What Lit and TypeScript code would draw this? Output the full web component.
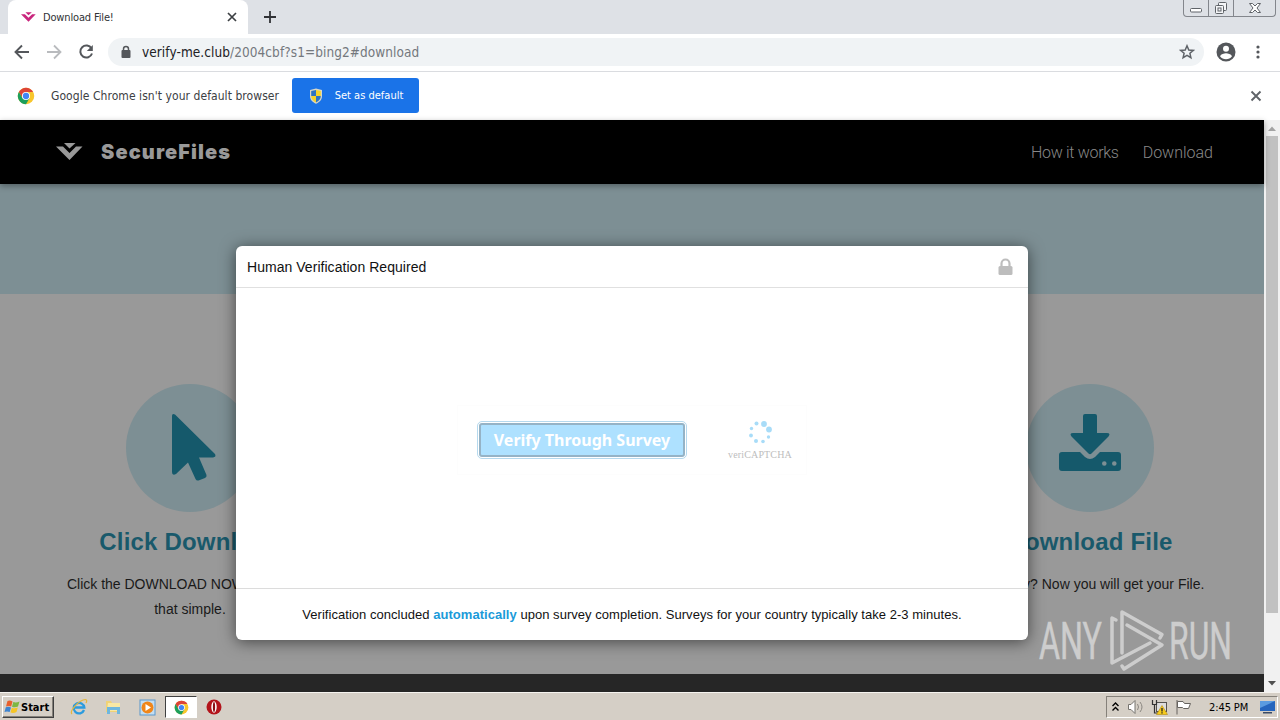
import { LitElement, html, css, svg } from "lit";
import { customElement } from "lit/decorators.js";

const chromeLogo = svg`
  <circle cx="12" cy="12" r="11" fill="#f8c62c"/>
  <path d="M2.5 6.5A11 11 0 0 1 21.5 6.5H12L7.2 14.8z" fill="#dd4437"/>
  <path d="M2.5 6.5A11 11 0 0 0 12 23L16.8 14.8H7.2z" fill="#1c9f5c"/>
  <circle cx="12" cy="12" r="5.4" fill="#fff"/>
  <circle cx="12" cy="12" r="4.2" fill="#4285f4"/>`;

const vMark = svg`
  <path d="M8 0H19.500L13.500 5.500z"/>
  <path d="M0 3.500H7L13.500 10L20 3.500H26.500L13.500 17z"/>`;

@customElement("browser-bar")
class BrowserBar extends LitElement {
  static styles = css`
    :host {
      display: block;
      font-family: "DejaVu Sans Condensed", "DejaVu Sans", sans-serif;
      font-stretch: condensed;
      color: #3c4043;
      background: #fff;
    }

    svg {
      display: block;
      flex: none;
    }

    .tabs {
      display: flex;
      height: 34px;
      background: #dee1e6;
      padding-left: 8px;
    }

    .tab {
      display: flex;
      align-items: center;
      box-sizing: border-box;
      width: 240px;
      padding: 0 10px 0 13px;
      background: #fff;
      border-radius: 8px 8px 0 0;
    }

    .tab__title {
      flex: 1;
      margin-left: 7px;
      font-size: 11px;
      letter-spacing: -0.15px;
      color: #303236;
    }

    .plus {
      margin: 10px 0 0 15px;
    }

    .window {
      display: flex;
      margin-left: auto;
      margin-right: 4px;
      box-sizing: border-box;
      width: 93px;
      height: 17px;
      border: 1px solid #83868c;
      border-top: 0;
      border-radius: 0 0 4px 4px;
    }

    .window__btn {
      display: flex;
      justify-content: center;
      align-items: center;
      width: 24px;
      border-right: 1px solid #83868c;
    }

    .window__btn--close {
      flex: 1;
      border: 0;
    }

    .toolbar {
      display: flex;
      align-items: center;
      box-sizing: border-box;
      height: 38px;
      padding: 0 13px 2px 13px;
      border-bottom: 1px solid #dadce0;
    }

    .nav {
      display: flex;
      gap: 14px;
      width: 95px;
    }

    .url {
      display: flex;
      flex: 1;
      align-items: center;
      height: 28px;
      padding: 0 9px 0 11px;
      background: #f0f3f5;
      border-radius: 14px;
    }

    .url__text {
      flex: 1;
      margin-left: 9px;
      font-size: 13.5px;
      letter-spacing: 0.07px;
      color: #74787d;
    }

    .url__text b {
      font-weight: normal;
      color: #202124;
    }

    .avatar {
      margin: 0 12px 0 12px;
    }

    .infobar {
      display: flex;
      align-items: center;
      box-sizing: border-box;
      height: 48px;
      padding: 0 18px 1px 17px;
    }

    .infobar__text {
      width: 241px;
      margin-left: 16px;
      font-size: 12px;
      letter-spacing: 0.06px;
      white-space: nowrap;
    }

    .infobar__btn {
      display: flex;
      align-items: center;
      justify-content: center;
      gap: 11px;
      width: 127px;
      height: 35px;
      border-radius: 3px;
      background: #1a73e8;
      color: #fff;
      font-size: 11px;
    }

    .infobar__close {
      margin-left: auto;
    }
  `;

  render() {
    return html`
      <div class="tabs">
        <div class="tab">
          <svg width="15" height="10" viewBox="0 0 27 17" fill="#c9267d">${vMark}</svg>
          <span class="tab__title">Download File!</span>
          <svg width="12" height="12" viewBox="0 0 12 12" stroke="#3c4043" stroke-width="1.700">
            <path d="M2 2L10 10M10 2L2 10"/>
          </svg>
        </div>
        <svg class="plus" width="14" height="14" viewBox="0 0 14 14" stroke="#303236" stroke-width="1.800">
          <path d="M7 1V13M1 7H13"/>
        </svg>
        <div class="window">
          <div class="window__btn">
            <svg width="14" height="16" fill="#fff" stroke="#5f6368"><rect x="1.500" y="8.500" width="11" height="3.500" rx="1"/></svg>
          </div>
          <div class="window__btn">
            <svg width="14" height="16" fill="#f4f5f7" stroke="#5f6368">
              <rect x="4.500" y="2.500" width="8" height="8" rx="1"/>
              <rect x="1.500" y="5.500" width="8" height="8" rx="1"/>
              <rect x="4" y="8" width="3" height="3"/>
            </svg>
          </div>
          <div class="window__btn window__btn--close">
            <svg width="14" height="16" viewBox="0 0 14 16" fill="#fff" stroke="#5f6368">
              <path d="M1.500 3.500H4.500L7 6L9.500 3.500H12.500L9 8L12.500 12.500H9.500L7 10L4.500 12.500H1.500L5 8z"/>
            </svg>
          </div>
        </div>
      </div>

      <div class="toolbar">
        <div class="nav">
          <svg width="18" height="18" viewBox="0 0 18 18" fill="none" stroke="#54575b" stroke-width="1.900"><path d="M16 9H3M9 2.500L2.500 9L9 15.500"/></svg>
          <svg width="18" height="18" viewBox="0 0 18 18" fill="none" stroke="#b9bbbe" stroke-width="1.800"><path d="M2 9H15M9 2.500L15.500 9L9 15.500"/></svg>
          <svg width="18" height="18" viewBox="0 0 18 18" fill="none" stroke="#54575b" stroke-width="2"><path d="M14.500 5.500A6 6 0 1 0 15 10.500"/><path d="M15.800 2V8H9.800z" fill="#54575b" stroke="none"/></svg>
        </div>
        <div class="url">
          <svg width="14" height="14" viewBox="0 0 14 14"><rect x="2.500" y="5" width="9" height="8" rx="1" fill="#54575b"/><path d="M4.500 6V4A2.500 2.500 0 0 1 9.500 4V6" fill="none" stroke="#54575b" stroke-width="1.500"/></svg>
          <span class="url__text"><b>verify-me.club</b>/2004cbf?s1=bing2#download</span>
          <svg width="16" height="16" viewBox="0 0 16 16" fill="none" stroke="#5f6368" stroke-width="1.500"><path d="M8 1.800L9.800 6L14.300 6.400L10.900 9.300L11.900 13.700L8 11.400L4.100 13.700L5.100 9.300L1.700 6.400L6.200 6z"/></svg>
        </div>
        <svg class="avatar" width="20" height="20" viewBox="0 0 20 20">
          <circle cx="10" cy="10" r="9.500" fill="#54575b"/>
          <circle cx="10" cy="6.700" r="3" fill="#fff"/>
          <path d="M4 14.200C5 12 8 11.300 10 11.300S15 12 16 14.200A7.300 7.300 0 0 1 4 14.200z" fill="#fff"/>
        </svg>
        <svg width="19" height="16" viewBox="0 0 19 16" fill="#54575b"><circle cx="10" cy="3" r="1.600"/><circle cx="10" cy="8" r="1.600"/><circle cx="10" cy="13" r="1.600"/></svg>
      </div>

      <div class="infobar">
        <svg width="18" height="18" viewBox="0 0 24 24">${chromeLogo}</svg>
        <span class="infobar__text">Google Chrome isn't your default browser</span>
        <div class="infobar__btn">
          <svg width="16" height="16" viewBox="0 0 16 16">
            <path d="M8 .500L14 2V8C14 12 11 14.500 8 15.700C5 14.500 2 12 2 8V2z" fill="#d7d7c8"/>
            <path d="M8 2V8H3.200V3z" fill="#2d74c4"/><path d="M8 2V8H12.800V3z" fill="#f5d32c"/>
            <path d="M8 8V14.400C5 13 3.200 11 3.200 8z" fill="#f5d32c"/><path d="M8 8V14.400C11 13 12.800 11 12.800 8z" fill="#2d74c4"/>
          </svg>
          <span>Set as default</span>
        </div>
        <svg class="infobar__close" width="12" height="12" viewBox="0 0 12 12" stroke="#5f6368" stroke-width="1.900"><path d="M1.500 1.500L10.500 10.500M10.500 1.500L1.500 10.500"/></svg>
      </div>
    `;
  }
}

@customElement("survey-modal")
class SurveyModal extends LitElement {
  static styles = css`
    :host {
      display: flex;
      flex-direction: column;
      background: #fff;
      border-radius: 6px;
      box-shadow: 0 2px 16px rgba(0, 0, 0, 0.55);
      font-family: "Liberation Sans", Arial, sans-serif;
      color: #111;
    }

    .head {
      display: flex;
      align-items: center;
      justify-content: space-between;
      height: 41px;
      padding: 0 15px 0 11px;
      border-bottom: 1px solid #e0e0e0;
      font-size: 14px;
      letter-spacing: 0.04px;
    }

    .body {
      display: flex;
      flex: 1;
      align-items: center;
      justify-content: center;
    }

    .box {
      display: flex;
      align-items: center;
      box-sizing: border-box;
      width: 350px;
      height: 70px;
      margin-top: 4px;
      padding-left: 19px;
      border: 1px solid #fdfdfd;
    }

    .btn {
      display: flex;
      align-items: center;
      justify-content: center;
      box-sizing: border-box;
      width: 206px;
      height: 34px;
      margin: 2px;
      border: 2px solid #95b3c6;
      border-radius: 3px;
      outline: 1px solid #b5d9ee;
      outline-offset: 1px;
      background: #aee1ff;
      color: #fff;
      font: bold 16px "Noto Sans", "Open Sans", sans-serif;
      white-space: nowrap;
    }

    .captcha {
      display: flex;
      flex-direction: column;
      align-items: center;
      width: 66px;
      margin-left: 40px;
      font: 10px "Liberation Serif", serif;
      letter-spacing: 0.15px;
      color: #bdbdbd;
    }

    .captcha span {
      margin-top: 3px;
    }

    .foot {
      display: flex;
      align-items: center;
      justify-content: center;
      height: 51px;
      border-top: 1px solid #dcdcdc;
      font-size: 13px;
      letter-spacing: 0.035px;
    }

    .foot p {
      margin: 0;
      white-space: nowrap;
    }

    .foot b {
      color: #1a9ad9;
    }
  `;

  render() {
    return html`
      <div class="head">
        <span>Human Verification Required</span>
        <svg width="15" height="18" viewBox="0 0 15 18"><rect x=".5" y="8" width="14" height="9" rx="1.500" fill="#bdbdbd"/><path d="M3.500 9V5.500A4 4 0 0 1 11.500 5.500V9" fill="none" stroke="#bdbdbd" stroke-width="2.200"/></svg>
      </div>
      <div class="body">
        <div class="box">
          <div class="btn">Verify Through Survey</div>
          <div class="captcha">
            <svg width="26" height="26" viewBox="0 0 26 26" fill="#a8dcf8">
              <circle cx="9.500" cy="3.500" r="2"/><circle cx="17" cy="4" r="2.900"/><circle cx="22" cy="9.500" r="2.900"/>
              <circle cx="21.500" cy="17" r="1.700"/><circle cx="16" cy="21.500" r="1.800"/><circle cx="9" cy="21" r="2"/>
              <circle cx="4" cy="15.500" r="1.900"/><circle cx="4.500" cy="8.500" r="1.700"/>
            </svg>
            <span>veriCAPTCHA</span>
          </div>
        </div>
      </div>
      <div class="foot">
        <p>Verification concluded <b>automatically</b> upon survey completion. Surveys for your country typically take 2-3 minutes.</p>
      </div>
    `;
  }
}

@customElement("secure-page")
class SecurePage extends LitElement {
  static styles = css`
    :host {
      display: flex;
      position: relative;
      font-family: "Liberation Sans", Arial, sans-serif;
    }

    .site {
      display: flex;
      flex-direction: column;
      width: 1264px;
      background: #999;
    }

    .header {
      display: flex;
      align-items: center;
      height: 64px;
      padding: 0 51px 1px 56px;
      box-sizing: border-box;
      background: #000;
      box-shadow: 0 2px 6px rgba(0, 0, 0, 0.35);
      z-index: 1;
    }

    .logo {
      flex: 1;
      margin-left: 18px;
      font: 900 20px Inter, sans-serif;
      letter-spacing: 1.1px;
      color: #999;
    }

    .links {
      display: flex;
      gap: 24px;
      padding-top: 1px;
      font: 300 16px Roboto, sans-serif;
      color: #888;
    }

    .links span:first-child {
      letter-spacing: -0.3px;
    }

    .banner {
      height: 110px;
      background: #7d8f94;
    }

    .cards {
      display: flex;
      flex: 1;
      justify-content: space-between;
      padding: 90px 24px 0 40px;
    }

    .card {
      display: flex;
      flex-direction: column;
      align-items: center;
      width: 300px;
      text-align: center;
    }

    .circle {
      display: flex;
      align-items: center;
      justify-content: center;
      width: 128px;
      height: 128px;
      border-radius: 50%;
      background: #7d8f94;
    }

    .card h2 {
      margin: 15px 0 0;
      font-size: 24px;
      line-height: 30px;
      letter-spacing: 0.2px;
      color: #19596b;
      white-space: nowrap;
    }

    .card p {
      width: 254px;
      margin: 15px 0 0;
      font-size: 14px;
      line-height: 25px;
      color: #1a1a1a;
    }

    .footer {
      height: 18px;
      background: #262626;
    }

    .scroll {
      display: flex;
      flex-direction: column;
      align-items: center;
      width: 16px;
      background: #f1f1f1;
    }

    .thumb {
      width: 12px;
      height: 477px;
      background: #c1c1c1;
    }

    .scroll svg:last-child {
      margin-top: auto;
    }

    survey-modal {
      position: absolute;
      z-index: 2;
      left: 236px;
      top: 126px;
      width: 792px;
      height: 394px;
    }

    .watermark {
      position: absolute;
      z-index: 3;
      left: 1030px;
      top: 485px;
      overflow: visible;
    }

    .watermark text {
      font-family: Roboto, sans-serif;
      font-weight: 400;
      font-size: 52px;
    }
  `;

  render() {
    return html`
      <div class="site">
        <div class="header">
          <svg width="27" height="17" viewBox="0 0 27 17" fill="#999">${vMark}</svg>
          <span class="logo">SecureFiles</span>
          <div class="links"><span>How it works</span><span>Download</span></div>
        </div>
        <div class="banner"></div>
        <div class="cards">
          <div class="card">
            <div class="circle">
              <svg width="128" height="128" viewBox="0 0 128 128" fill="#15596b">
                <path d="M46 32Q46 29 49 30.500L89 70Q90.500 73 87 73.500H73L80.500 91Q81 93 79 94L72.500 96.500Q70.500 97 69.500 95L62 78.500L50 90Q46 92 46 88z"/>
              </svg>
            </div>
            <h2>Click Download</h2>
            <p>Click the DOWNLOAD NOW button. It's that simple.</p>
          </div>
          <div class="card">
            <div class="circle">
              <svg width="128" height="128" viewBox="0 0 128 128" fill="#15596b">
                <path d="M57 32Q57 30 59 30H69Q71 30 71 32V49H81Q85 49 82.500 52.500L65.500 69.500Q64 71 62.500 69.500L45.500 52.500Q43 49 47 49H57z"/>
                <path fill-rule="evenodd" d="M36 68H54L59 73Q64 77 69 73L74 68H92Q95 68 95 71V84Q95 87 92 87H36Q33 87 33 84V71Q33 68 36 68zM76 79.500a2.300 2.300 0 1 0 4.600 0a2.300 2.300 0 1 0-4.600 0zM86 79.500a2.300 2.300 0 1 0 4.600 0a2.300 2.300 0 1 0-4.600 0z"/>
              </svg>
            </div>
            <h2>Download File</h2>
            <p>All ready? Now you will get your File.</p>
          </div>
        </div>
        <div class="footer"></div>
      </div>
      <div class="scroll">
        <svg width="16" height="16" fill="#a3a3a3"><path d="M4 11L8 6.500L12 11z"/></svg>
        <div class="thumb"></div>
        <svg width="16" height="16" fill="#505050"><path d="M4 5L8 9.500L12 5z"/></svg>
      </div>
      <survey-modal></survey-modal>
      <svg class="watermark" width="210" height="72" viewBox="0 0 210 72" fill="#cdcdcd" stroke="#cdcdcd">
        <text x="9" y="54" textLength="63" lengthAdjust="spacingAndGlyphs" stroke-width="0.500">ANY</text>
        <text x="139" y="54" textLength="63" lengthAdjust="spacingAndGlyphs" stroke-width="0.500">RUN</text>
        <g fill="none" stroke-width="3.500" stroke-linejoin="round" stroke-linecap="round">
          <path d="M86 15L82 13V58L120 38"/>
          <path d="M92 48V7L132 29.500L130 33"/>
          <path d="M97 20L132 40L94 64L92 61"/>
        </g>
      </svg>
    `;
  }
}

@customElement("task-bar")
class TaskBar extends LitElement {
  static styles = css`
    :host {
      display: flex;
      align-items: center;
      box-sizing: border-box;
      height: 28px;
      padding: 1px 2px 0;
      border-top: 1px solid #f5f3ef;
      background: #d5cfc6;
      font-family: "DejaVu Sans Condensed", "DejaVu Sans", sans-serif;
      font-stretch: condensed;
      font-size: 11px;
      color: #000;
    }

    .start {
      display: flex;
      align-items: center;
      box-sizing: border-box;
      width: 52px;
      height: 22px;
      padding-left: 1px;
      border: 1px solid;
      border-color: #fff #404040 #404040 #fff;
      box-shadow: inset -1px -1px #85817a;
      font-weight: bold;
    }

    .apps {
      display: flex;
      align-items: center;
      margin-left: 8px;
    }

    .app {
      display: flex;
      align-items: center;
      justify-content: center;
      box-sizing: border-box;
      width: 34px;
      height: 22px;
    }

    .app--on {
      width: 32px;
      margin-left: 1px;
      background: #fff;
      border: 1px solid;
      border-color: #404040 #fff #fff #404040;
    }

    .tray {
      display: flex;
      align-items: center;
      box-sizing: border-box;
      width: 172px;
      height: 22px;
      margin-left: auto;
      padding: 0 0 0 4px;
      border: 1px solid;
      border-color: #85817a #fff #fff #85817a;
    }

    .tray svg {
      flex: none;
      margin-right: 7px;
    }

    .time {
      margin-left: 10px;
      margin-right: 11px;
      letter-spacing: -0.1px;
      white-space: nowrap;
    }
  `;

  render() {
    return html`
      <div class="start">
        <svg width="17" height="16" viewBox="0 0 17 16">
          <path d="M3.500 2Q6 1 8.500 2.500L7.200 7.500Q4.500 6.500 2 7.500z" fill="#e8602c"/>
          <path d="M9.300 3Q12 4 15.500 2.500L14 7.500Q11 9 8 7.800z" fill="#7db742"/>
          <path d="M1.800 8.300Q4.500 7.300 7 8.500L5.700 13Q3 12 .500 13z" fill="#3e84d0"/>
          <path d="M7.800 8.800Q10.500 10 13.800 8.500L12.500 13Q9.500 14.700 6.500 13.500z" fill="#f6c526"/>
        </svg>
        <span>Start</span>
      </div>
      <div class="apps">
        <div class="app">
          <svg width="18" height="18" viewBox="0 0 18 18" fill="none">
            <path d="M14 12A5.300 5.300 0 1 1 14.300 9.500H4.500" stroke="#2b9bde" stroke-width="2.300"/>
            <path d="M2 16C-1 13 9 2 15.500 1.500C17 1.500 17 3 16 5" stroke="#e5b63a" stroke-width="1.200"/>
          </svg>
        </div>
        <div class="app">
          <svg width="18" height="18" viewBox="0 0 18 18">
            <path d="M2 3H7L8 5H15V14H2z" fill="#f0d276"/><path d="M4 5H16V13H3z" fill="#f8e8a4"/>
            <path d="M3 9H16V16H13V12H6V16H3z" fill="#6fb7de"/>
          </svg>
        </div>
        <div class="app">
          <svg width="17" height="17" viewBox="0 0 17 17">
            <rect x="1" y="1" width="15" height="15" fill="#c4def1" stroke="#5b98cc"/>
            <circle cx="8.500" cy="8.500" r="6" fill="#f08619"/><path d="M6.500 5L12 8.500L6.500 12z" fill="#fff"/>
          </svg>
        </div>
        <div class="app app--on"><svg width="15" height="15" viewBox="0 0 24 24">${chromeLogo}</svg></div>
        <div class="app">
          <svg width="16" height="16" viewBox="0 0 16 16"><circle cx="8" cy="8" r="7.500" fill="#b3141b"/><ellipse cx="8" cy="8" rx="2.700" ry="5.700" fill="#fff"/><ellipse cx="8" cy="8" rx="1.100" ry="5" fill="#8c0f15"/></svg>
        </div>
      </div>
      <div class="tray">
        <svg width="9" height="12" viewBox="0 0 9 12" fill="none" stroke="#000" stroke-width="1.400"><path d="M1.500 5L4.500 2L7.500 5M1.500 9.500L4.500 6.500L7.500 9.500"/></svg>
        <svg width="17" height="16" viewBox="0 0 17 16" fill="none" stroke="#77746f"><path d="M1.500 5.500H4L8 1.500V14.500L4 10.500H1.500z" fill="#fff"/><path d="M10.500 5Q12.500 8 10.500 11M13 3Q17 8 13 13" stroke="#8b8781"/></svg>
        <svg width="17" height="16" viewBox="0 0 17 16"><rect x="5.500" y="3.500" width="10" height="9" fill="#ddd" stroke="#55534f"/><path d="M1.500 1V5.500H5.500V1M3.500 5.500V14H7" fill="none" stroke="#333" stroke-width="1.200"/><path d="M11 6.500L16.500 15.500H5.500z" fill="#f6cb1d" stroke="#b58b0c" stroke-width=".6"/><path d="M11 9V12.500M11 13.300V14.500" stroke="#222" stroke-width="1.300"/></svg>
        <svg width="17" height="16" viewBox="0 0 17 16" fill="#fff" stroke="#66635e"><path d="M2 1V15.500"/><path d="M2.500 2.500H8L9.500 4.500H15.500L13.500 9.500H8.500L7.500 8.500H2.500z"/></svg>
        <span class="time">2:45 PM</span>
        <svg width="17" height="16" viewBox="0 0 17 16"><path d="M1 2H16V12H1z" fill="#2565bd"/><path d="M1 2H16L1 9z" fill="#5a9be0"/><path d="M4 13H13V14.500H4z" fill="#3a4b66"/></svg>
      </div>
    `;
  }
}

@customElement("app-root")
class AppRoot extends LitElement {
  static styles = css`
    :host {
      display: flex;
      flex-direction: column;
      width: 1280px;
      height: 720px;
      overflow: hidden;
    }

    secure-page {
      flex: 1;
    }
  `;

  render() {
    return html`
      <browser-bar></browser-bar>
      <secure-page></secure-page>
      <task-bar></task-bar>
    `;
  }
}
